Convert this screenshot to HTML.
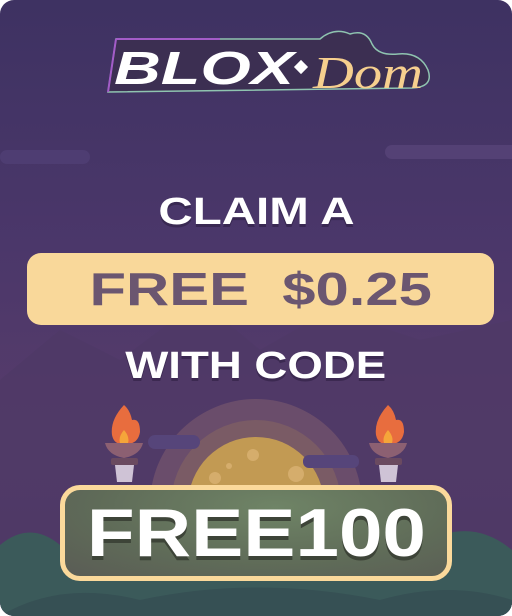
<!DOCTYPE html>
<html><head><style>
*{margin:0;padding:0;box-sizing:border-box}
body{width:512px;height:616px;background:#fff;overflow:hidden;font-family:"Liberation Sans",sans-serif}
.card{position:absolute;left:0;top:0;width:512px;height:616px;border-radius:14px;overflow:hidden;background:linear-gradient(180deg,#3e3262 0%,#4b376a 40%,#573c6b 70%,#4d3a63 100%)}
.t{position:absolute;left:0;width:512px;text-align:center;color:#fff;font-weight:900;text-shadow:0 3px 0 rgba(40,25,60,.5)}
.s{display:inline-block}
</style></head><body>
<div class="card">
<svg width="512" height="616" style="position:absolute;left:0;top:0">
<rect x="385" y="145" width="140" height="14" rx="7" fill="#5e4a7e" opacity=".6"/>
<rect x="0" y="150" width="90" height="14" rx="7" fill="#54427a" opacity=".6"/>
<path d="M0 380 L60 330 L120 360 L200 300 L260 350 L330 310 L420 340 L512 320 L512 616 L0 616Z" fill="#4f3a66" opacity=".8"/>
<circle cx="256" cy="505" r="106" fill="#6a4d6b"/>
<circle cx="256" cy="505" r="85" fill="#7a5b65"/>
<circle cx="256" cy="505" r="68" fill="#c29a53"/>
<circle cx="253" cy="455" r="6" fill="#d5ad6c"/><circle cx="229" cy="466" r="3" fill="#d5ad6c"/>
<circle cx="215" cy="478" r="6" fill="#d5ad6c"/><circle cx="296" cy="474" r="8" fill="#d5ad6c"/>
<rect x="148" y="435" width="52" height="14" rx="7" fill="#56457a"/>
<rect x="303" y="455" width="56" height="13" rx="6" fill="#56457a"/>
<path d="M0 616 L0 545 Q30 520 60 545 Q90 525 120 560 L340 560 Q380 520 420 545 Q470 515 512 550 L512 616Z" fill="#3b5a5a"/>
<path d="M0 616 Q60 580 140 600 Q256 575 380 600 Q450 580 512 600 L512 616Z" fill="#365054"/>
<g id="torch">
<path d="M124 405 Q110 420 112 435 Q114 445 124 444 Q138 445 140 432 Q140 418 132 420 Q130 410 124 405Z" fill="#e86d3e"/>
<path d="M124 430 Q118 437 120 443 L128 443 Q130 437 124 430Z" fill="#f5a53a"/>
<path d="M105 443 L143 443 Q140 455 124 458 Q108 455 105 443Z" fill="#8c6072"/>
<rect x="111" y="458" width="27" height="7" rx="2" fill="#6a4a60"/>
<path d="M115 465 L134 465 L132 482 L117 482Z" fill="#cfc3d6"/>
</g>
<use href="#torch" transform="translate(264 0)"/>
</svg>
<svg width="512" height="120" style="position:absolute;left:0;top:0">
<path d="M116 39 L320 39 Q334 27 350 34 Q366 29 372 44 Q378 56 398 54 Q420 52 428 70 Q434 87 412 88 L108 92Z" fill="#3c2f52" stroke="#8fc4b0" stroke-width="1.5"/>
<path d="M116 39 L220 39" stroke="#a35cc8" stroke-width="2"/>
<path d="M116 39 L108 92" stroke="#a35cc8" stroke-width="2"/>
<text x="114" y="84" font-family="Liberation Sans" font-weight="900" font-style="italic" font-size="46" fill="#fff" textLength="180" lengthAdjust="spacingAndGlyphs">BLOX</text>
<rect x="296" y="62" width="10" height="10" transform="rotate(45 301 67)" fill="#fff"/>
<text x="313" y="88" font-family="Liberation Serif" font-style="italic" font-size="46" fill="#f6cf8e" textLength="110" lengthAdjust="spacingAndGlyphs">Dom</text>
</svg>
<div class="t" style="top:191px;font-size:38px"><span class="s" style="transform:scaleX(1.25)">CLAIM A</span></div>
<div style="position:absolute;left:27px;top:253px;width:467px;height:72px;border-radius:14px;background:#f9d89a;text-align:center;line-height:72px;font-size:46px;font-weight:900;color:#6b5670"><span class="s" style="transform:scaleX(1.3)">FREE&nbsp; $0.25</span></div>
<div class="t" style="top:345px;font-size:38px"><span class="s" style="transform:scaleX(1.2)">WITH CODE</span></div>
<div style="position:absolute;left:60px;top:485px;width:392px;height:96px;border-radius:20px;border:5px solid #fbd99b;background:radial-gradient(ellipse at 55% 20%,#6f8466 0%,#5f6b58 60%,#5a5c55 100%);text-align:center;line-height:86px;font-size:68px;font-weight:900;color:#fff;text-shadow:0 4px 0 #3d4438"><span class="s" style="transform:scaleX(1.15)">FREE100</span></div>
</div>
</body></html>
